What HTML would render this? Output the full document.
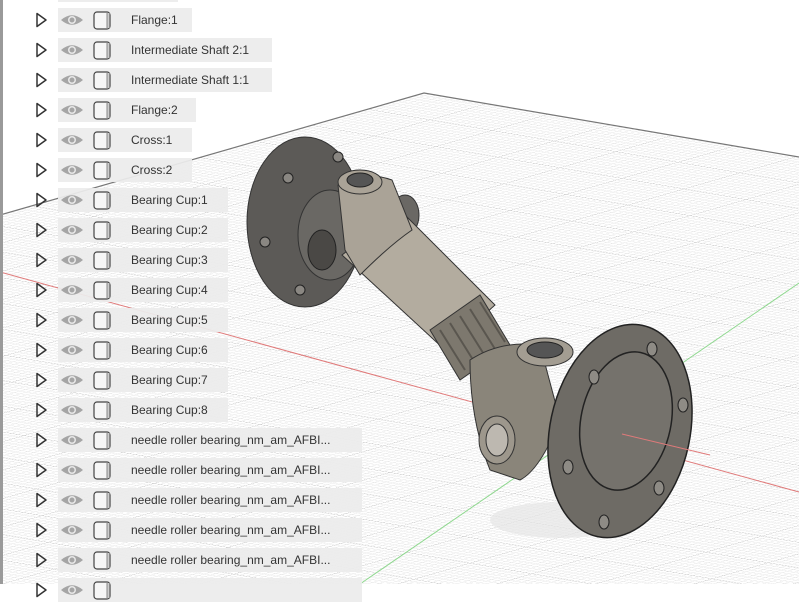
<!DOCTYPE html>
<html><head><meta charset="utf-8"><style>
body{margin:0;width:799px;height:584px;overflow:hidden;background:#fff;position:relative;font-family:"Liberation Sans",sans-serif}
svg.bg{position:absolute;left:0;top:0}
.row{position:absolute;left:0;height:24px}
.pill{position:absolute;left:58px;top:0;height:24px;background:rgba(236,236,236,0.93)}
.lbl{position:absolute;left:131px;top:5px;font-size:12px;color:#333;white-space:nowrap}
.ic{position:absolute;left:0;top:0}
.lbar{position:absolute;left:0;top:0;width:3px;height:584px;background:#9a9a9a}
</style></head><body>
<svg class="bg" width="799" height="584" viewBox="0 0 799 584">
<defs>
<pattern id="g" width="100" height="100" patternUnits="userSpaceOnUse" patternTransform="matrix(0.62,0.106,-0.56,0.161,424,93)">
<path d="M10 0V100M20 0V100M30 0V100M40 0V100M50 0V100M60 0V100M70 0V100M80 0V100M90 0V100M0 10H100M0 20H100M0 30H100M0 40H100M0 50H100M0 60H100M0 70H100M0 80H100M0 90H100" stroke="#e2e2e2" stroke-width="1.3" fill="none"/>
<path d="M0 0V100M0 0H100" stroke="#b5b5b5" stroke-width="2" fill="none"/>
</pattern>
<clipPath id="c"><polygon points="424,93 799,157 799,584 0,584 0,215"/></clipPath>
</defs>
<g clip-path="url(#c)">
<rect width="799" height="584" fill="url(#g)"/>
<line x1="0" y1="272" x2="799" y2="492" stroke="#e07a7a" stroke-width="1"/>
<line x1="799" y1="283" x2="360" y2="584" stroke="#8fd88f" stroke-width="1"/>
</g>
<polyline points="0,215 424,93 799,157" fill="none" stroke="#777" stroke-width="1.2"/>
<ellipse cx="560" cy="520" rx="70" ry="18" fill="#e6e6e6" opacity=".7"/>
<!-- left flange -->
<ellipse cx="305" cy="222" rx="58" ry="85" fill="#5c5a57" stroke="#333"/>
<circle cx="288" cy="178" r="5" fill="#8a8782" stroke="#222"/>
<circle cx="338" cy="157" r="5" fill="#8a8782" stroke="#222"/>
<circle cx="265" cy="242" r="5" fill="#8a8782" stroke="#222"/>
<circle cx="300" cy="290" r="5" fill="#8a8782" stroke="#222"/>
<ellipse cx="330" cy="235" rx="32" ry="45" fill="#6a6864" stroke="#333"/>
<ellipse cx="322" cy="250" rx="14" ry="20" fill="#4a4845" stroke="#222"/>
<ellipse cx="405" cy="215" rx="14" ry="20" fill="#6a6864" stroke="#333"/>
<!-- tube -->
<polygon points="342,255 400,210 495,305 445,350" fill="#b3ac9f" stroke="#333"/>
<path d="M338,185 Q365,170 392,180 L412,230 Q390,245 360,275 L345,250 Z" fill="#aaa397" stroke="#333"/>
<ellipse cx="360" cy="182" rx="22" ry="12" fill="#aaa397" stroke="#333"/>
<ellipse cx="360" cy="180" rx="13" ry="7" fill="#555" stroke="#222"/>
<!-- spline -->
<polygon points="430,330 480,295 510,345 460,380" fill="#7d786e" stroke="#333"/>
<path d="M440,330l25,40M450,323l25,40M460,316l25,40M470,309l25,40M480,302l25,40" stroke="#5a564f" stroke-width="2"/>
<!-- right yoke -->
<path d="M470,360 Q500,340 540,345 L560,420 Q540,470 520,480 L490,470 Q470,420 470,360Z" fill="#8a857a" stroke="#333"/>
<ellipse cx="545" cy="352" rx="28" ry="14" fill="#a39d92" stroke="#333"/>
<ellipse cx="545" cy="350" rx="18" ry="8" fill="#555" stroke="#222"/>
<ellipse cx="497" cy="440" rx="18" ry="24" fill="#9d978c" stroke="#333"/>
<ellipse cx="497" cy="440" rx="11" ry="16" fill="#bdb8b0" stroke="#333"/>
<!-- right flange -->
<ellipse cx="620" cy="431" rx="70" ry="108" transform="rotate(12 620 431)" fill="#6e6b65" stroke="#222" stroke-width="1.5"/>
<ellipse cx="626" cy="421" rx="45" ry="70" transform="rotate(12 626 421)" fill="#75726c" stroke="#222" stroke-width="1.5"/>
<ellipse cx="652" cy="349" rx="5" ry="7" fill="#8e8b85" stroke="#222"/>
<ellipse cx="594" cy="377" rx="5" ry="7" fill="#8e8b85" stroke="#222"/>
<ellipse cx="683" cy="405" rx="5" ry="7" fill="#8e8b85" stroke="#222"/>
<ellipse cx="568" cy="467" rx="5" ry="7" fill="#8e8b85" stroke="#222"/>
<ellipse cx="659" cy="488" rx="5" ry="7" fill="#8e8b85" stroke="#222"/>
<ellipse cx="604" cy="522" rx="5" ry="7" fill="#8e8b85" stroke="#222"/>
<line x1="622" y1="434" x2="710" y2="455" stroke="#e07a7a" stroke-width="1"/>
</svg>
<div class="lbar"></div>
<div id="rows"></div>
<script>
var L=["","Flange:1","Intermediate Shaft 2:1","Intermediate Shaft 1:1","Flange:2","Cross:1","Cross:2","Bearing Cup:1","Bearing Cup:2","Bearing Cup:3","Bearing Cup:4","Bearing Cup:5","Bearing Cup:6","Bearing Cup:7","Bearing Cup:8","needle roller bearing_nm_am_AFBI...","needle roller bearing_nm_am_AFBI...","needle roller bearing_nm_am_AFBI...","needle roller bearing_nm_am_AFBI...","needle roller bearing_nm_am_AFBI...",""];
var W=[120,134,214,214,138,134,134,170,170,170,170,170,170,170,170,304,304,304,304,304,304];
var h="";
for(var i=0;i<L.length;i++){var y=-22+i*30;
h+='<div class="row" style="top:'+y+'px;width:400px"><div class="pill" style="width:'+W[i]+'px"></div>'+
'<svg class="ic" width="130" height="24"><path d="M37 5.5L46 12L37 18.5Z" fill="none" stroke="#333" stroke-width="1.5" stroke-linejoin="round"/>'+
'<path d="M61 12Q72 2.5 83 12Q72 21.5 61 12Z" fill="#a5a5a5"/><circle cx="72" cy="12" r="4" fill="#e8e8e8"/><circle cx="72" cy="12" r="2.5" fill="#a5a5a5"/>'+
'<rect x="94" y="4" width="16" height="17" rx="3" fill="#f6f6f6" stroke="#444" stroke-width="1.2"/><path d="M107 5V20" stroke="#888" stroke-width="1"/><rect x="107.5" y="5" width="2" height="15" fill="#ccc"/></svg>'+
'<div class="lbl">'+L[i]+'</div></div>';}
document.getElementById("rows").innerHTML=h;
</script>
</body></html>
